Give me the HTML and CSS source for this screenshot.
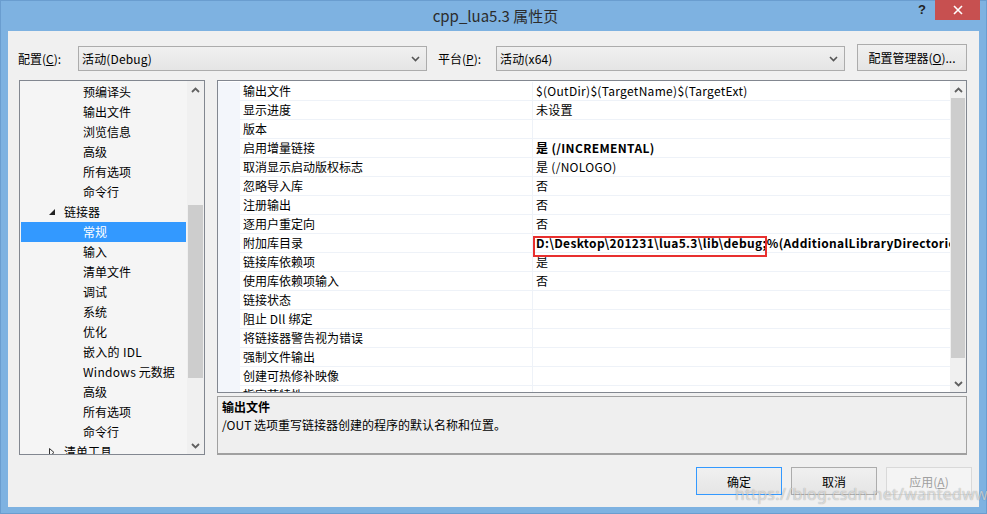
FILE: index.html
```html
<!DOCTYPE html>
<html lang="zh-CN">
<head>
<meta charset="utf-8">
<title>cpp_lua5.3 属性页</title>
<link rel="stylesheet" href="styles.css">
</head>
<body>
<div class="window">
  <div class="titlebar">
    <div class="tb-left"></div>
    <div class="title">cpp_lua5.3 属性页</div>
    <div class="tb-right">
      <span class="help">?</span>
      <span class="close"><svg width="10" height="10" viewBox="0 0 10 10"><path d="M1 1 L9 9 M9 1 L1 9" stroke="#fff" stroke-width="1.6"/></svg></span>
    </div>
  </div>
  <div class="client">
    <div class="toprow">
      <span class="lbl lbl1">配置(<u>C</u>):</span>
      <div class="combo"><span>活动(Debug)</span><svg class="chev" width="9" height="6" viewBox="0 0 9 6"><path d="M1 1 L4.5 4.5 L8 1" stroke="#555" stroke-width="1.6" fill="none"/></svg></div>
      <span class="lbl lbl2">平台(<u>P</u>):</span>
      <div class="combo"><span>活动(x64)</span><svg class="chev" width="9" height="6" viewBox="0 0 9 6"><path d="M1 1 L4.5 4.5 L8 1" stroke="#555" stroke-width="1.6" fill="none"/></svg></div>
      <div class="btn cfgbtn">配置管理器(<u>O</u>)...</div>
    </div>
    <div class="main">
      <div class="tree">
        <div class="tree-list">
          <div class="ti l2">预编译头</div>
          <div class="ti l2">输出文件</div>
          <div class="ti l2">浏览信息</div>
          <div class="ti l2">高级</div>
          <div class="ti l2">所有选项</div>
          <div class="ti l2">命令行</div>
          <div class="ti l1"><svg class="tri" width="6" height="6" viewBox="0 0 6 6"><polygon points="6,0 6,6 0,6" fill="#222"/></svg>链接器</div>
          <div class="ti l2 sel">常规</div>
          <div class="ti l2">输入</div>
          <div class="ti l2">清单文件</div>
          <div class="ti l2">调试</div>
          <div class="ti l2">系统</div>
          <div class="ti l2">优化</div>
          <div class="ti l2"><span class="lat">嵌入的 IDL</span></div>
          <div class="ti l2"><span class="lat">Windows</span>&nbsp;元数据</div>
          <div class="ti l2">高级</div>
          <div class="ti l2">所有选项</div>
          <div class="ti l2">命令行</div>
          <div class="ti l1"><svg class="tri" width="6" height="9" viewBox="0 0 6 9"><polygon points="0.5,0.5 5,4.5 0.5,8.5" fill="none" stroke="#333" stroke-width="1"/></svg>清单工具</div>
        </div>
        <div class="vscroll tree-scroll">
          <div class="arrow"><svg width="9" height="6" viewBox="0 0 9 6"><path d="M1 5 L4.5 1.5 L8 5" stroke="#606060" stroke-width="1.8" fill="none"/></svg></div>
          <div class="track"><div class="thumb"></div></div>
          <div class="arrow"><svg width="9" height="6" viewBox="0 0 9 6"><path d="M1 1 L4.5 4.5 L8 1" stroke="#606060" stroke-width="1.8" fill="none"/></svg></div>
        </div>
      </div>
      <div class="rightcol">
        <div class="grid">
          <div class="grid-body">
            <div class="row"><div class="gut"></div><div class="name">输出文件</div><div class="val">$(OutDir)$(TargetName)$(TargetExt)</div></div>
            <div class="row"><div class="gut"></div><div class="name">显示进度</div><div class="val">未设置</div></div>
            <div class="row"><div class="gut"></div><div class="name">版本</div><div class="val"></div></div>
            <div class="row"><div class="gut"></div><div class="name">启用增量链接</div><div class="val b">是 (/INCREMENTAL)</div></div>
            <div class="row"><div class="gut"></div><div class="name">取消显示启动版权标志</div><div class="val">是 (/NOLOGO)</div></div>
            <div class="row"><div class="gut"></div><div class="name">忽略导入库</div><div class="val">否</div></div>
            <div class="row"><div class="gut"></div><div class="name">注册输出</div><div class="val">否</div></div>
            <div class="row"><div class="gut"></div><div class="name">逐用户重定向</div><div class="val">否</div></div>
            <div class="row"><div class="gut"></div><div class="name">附加库目录</div><div class="val b mark">D:\Desktop\201231\lua5.3\lib\debug;%(AdditionalLibraryDirectories)<span class="redbox"></span></div></div>
            <div class="row"><div class="gut"></div><div class="name">链接库依赖项</div><div class="val">是</div></div>
            <div class="row"><div class="gut"></div><div class="name">使用库依赖项输入</div><div class="val">否</div></div>
            <div class="row"><div class="gut"></div><div class="name">链接状态</div><div class="val"></div></div>
            <div class="row"><div class="gut"></div><div class="name">阻止 <span class="lat">Dll</span> 绑定</div><div class="val"></div></div>
            <div class="row"><div class="gut"></div><div class="name">将链接器警告视为错误</div><div class="val"></div></div>
            <div class="row"><div class="gut"></div><div class="name">强制文件输出</div><div class="val"></div></div>
            <div class="row"><div class="gut"></div><div class="name">创建可热修补映像</div><div class="val"></div></div>
            <div class="row"><div class="gut"></div><div class="name">指定节特性</div><div class="val"></div></div>
          </div>
          <div class="vscroll grid-scroll">
            <div class="arrow"><svg width="9" height="6" viewBox="0 0 9 6"><path d="M1 5 L4.5 1.5 L8 5" stroke="#606060" stroke-width="1.8" fill="none"/></svg></div>
            <div class="track"><div class="thumb"></div></div>
            <div class="arrow"><svg width="9" height="6" viewBox="0 0 9 6"><path d="M1 1 L4.5 4.5 L8 1" stroke="#606060" stroke-width="1.8" fill="none"/></svg></div>
          </div>
        </div>
        <div class="desc">
          <div class="desc-title">输出文件</div>
          <div class="desc-text">/OUT 选项重写链接器创建的程序的默认名称和位置。</div>
        </div>
      </div>
    </div>
    <div class="buttons">
      <div class="btn dlg default">确定</div>
      <div class="btn dlg">取消</div>
      <div class="btn dlg disabled">应用(<u>A</u>)</div>
    </div>
  </div>
  <div class="watermark">https://blog.csdn.net/wantedww</div>
</div>
</body>
</html>
```

FILE: styles.css
```css
* { box-sizing: border-box; }
html, body { margin: 0; padding: 0; }
body {
  width: 987px;
  height: 514px;
  overflow: hidden;
  font-family: "Noto Sans CJK SC", "Noto Sans", sans-serif;
  font-size: 12px;
  color: #000;
}
.lat { letter-spacing: 0.3px; }
.window {
  position: relative;
  width: 987px;
  height: 514px;
  background: #7eb2e1;
  border: 1px solid #6a9dcf;
  display: flex;
  flex-direction: column;
}
.titlebar {
  height: 30px;
  display: grid;
  grid-template-columns: 1fr auto 1fr;
  align-items: start;
}
.title {
  font-size: 15px;
  line-height: 30px;
  color: #2c2c2c;
  padding-left: 4px;
}
.tb-right {
  display: flex;
  justify-content: flex-end;
  align-items: flex-start;
  padding-right: 6px;
}
.help {
  font-family: "Liberation Sans", sans-serif;
  font-weight: bold;
  font-size: 13px;
  color: #222;
  line-height: 20px;
  margin-right: 9px;
  margin-top: -1px;
}
.close {
  width: 45px;
  height: 20px;
  margin-top: -1px;
  background: #c75050;
  display: flex;
  align-items: center;
  justify-content: center;
}
.client {
  margin: 0 7px 0 7px;
  height: 476px;
  background: #f0f0f0;
  display: flex;
  flex-direction: column;
}
.toprow {
  display: flex;
  align-items: center;
  height: 27px;
  margin-top: 13px;
  padding-left: 10px;
}
.lbl { line-height: 16px; padding-top: 2px; }
.lbl1 { width: 60px; }
.lbl2 { width: 58px; margin-left: 11px; }
.combo {
  width: 349px;
  height: 25px;
  margin-top: 2px;
  border: 1px solid #acacac;
  background: linear-gradient(#f0f0f0, #e5e5e5);
  display: flex;
  align-items: center;
  justify-content: space-between;
  padding: 0 6px 0 3px;
  letter-spacing: 0.15px;
}
.btn {
  border: 1px solid #acacac;
  background: linear-gradient(#f0f0f0, #e5e5e5);
  display: flex;
  align-items: center;
  justify-content: center;
}
.cfgbtn {
  width: 110px;
  height: 27px;
  margin-left: 12px;
}
.main {
  display: flex;
  margin-top: 9px;
  padding-left: 11px;
  height: 375px;
}
.tree {
  width: 186px;
  height: 375px;
  border: 1px solid #828790;
  background: #f5f5f5;
  display: flex;
  overflow: hidden;
}
.tree-list {
  flex: 1;
  padding: 1px 1px 0 1px;
  overflow: hidden;
}
.ti {
  height: 20px;
  line-height: 20px;
  white-space: nowrap;
  display: flex;
  align-items: center;
}
.l2 { padding-left: 62px; }
.l1 { padding-left: 28px; }
.tri { margin-right: 9px; flex: none; }
.ti.sel { background: #3399ff; color: #fff; }
.vscroll {
  width: 17px;
  flex: none;
  background: #f0f0f0;
  display: flex;
  flex-direction: column;
}
.arrow {
  height: 17px;
  display: flex;
  align-items: center;
  justify-content: center;
  flex: none;
}
.track { flex: 1; display: flex; flex-direction: column; }
.thumb { background: #cdcdcd; margin: 0 1px; }
.tree-scroll .track { padding-top: 107px; }
.tree-scroll .thumb { height: 173px; }
.grid-scroll .thumb { height: 260px; }
.rightcol {
  width: 750px;
  margin-left: 12px;
  display: flex;
  flex-direction: column;
}
.grid {
  height: 313px;
  border: 1px solid #828790;
  background: #fff;
  display: flex;
  overflow: hidden;
}
.grid-body {
  flex: 1;
  padding-top: 1px;
  overflow: hidden;
}
.grid-scroll { width: 16px; }
.row {
  display: flex;
  height: 19px;
}
.gut {
  width: 22px;
  flex: none;
  background: #f3f6fb;
}
.name {
  width: 293px;
  flex: none;
  padding-left: 3px;
  line-height: 18px;
  border-bottom: 1px solid #eef2f8;
  border-right: 1px solid #eef2f8;
  white-space: nowrap;
}
.val {
  flex: 1;
  padding-left: 3px;
  line-height: 18px;
  border-bottom: 1px solid #eef2f8;
  white-space: nowrap;
  overflow: hidden;
  letter-spacing: 0.3px;
}
.val.b { font-weight: bold; letter-spacing: 0.35px; }
.val.mark { position: relative; overflow: visible; }
.redbox {
  position: absolute;
  left: 0;
  top: 2px;
  width: 234px;
  height: 21px;
  border: 2px solid #e8302f;
}
.desc {
  margin-top: 3px;
  height: 59px;
  border: 1px solid #a0a0a0;
  border-bottom: 2px solid #a0a0a0;
  background: #efefef;
  padding: 1px 4px;
}
.desc-title { font-weight: bold; line-height: 18px; }
.desc-text { line-height: 18px; }
.buttons {
  display: flex;
  justify-content: flex-end;
  gap: 9px;
  margin-top: 12px;
  padding-right: 7px;
}
.dlg { width: 86px; height: 28px; }
.dlg.default { border-color: #3399ff; }
.dlg.disabled { color: #a0a0a0; border-color: #d9d9d9; background: #f4f4f4; }
.watermark {
  position: absolute;
  right: -2px;
  bottom: 8px;
  font-family: "Noto Sans", sans-serif;
  font-size: 16px;
  letter-spacing: 0.3px;
  color: rgba(255, 255, 255, 0.6);
  text-shadow: 0 0 1px rgba(0, 0, 0, 0.4);
  white-space: nowrap;
}
```
